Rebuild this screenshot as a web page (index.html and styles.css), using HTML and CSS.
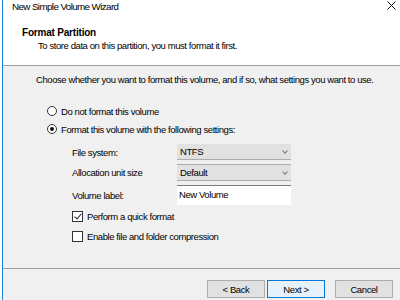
FILE: index.html
```html
<!DOCTYPE html>
<html lang="en">
<head>
  <meta charset="UTF-8">
  <title>New Simple Volume Wizard</title>
  <link rel="stylesheet" href="styles.css">
</head>
<body>
  <div class="window">
    <div class="titlebar">
      <span class="title">New Simple Volume Wizard</span>
      <svg class="close" width="9" height="9" viewBox="0 0 9 9">
        <path d="M0.5 0.5 L8.5 8.5 M8.5 0.5 L0.5 8.5" stroke="#111" stroke-width="1" fill="none"/>
      </svg>
    </div>

    <div class="header">
      <div class="heading">Format Partition</div>
      <div class="sub">To store data on this partition, you must format it first.</div>
    </div>

    <div class="content">
      <p class="intro">Choose whether you want to format this volume, and if so, what settings you want to use.</p>

      <div class="radio"><span class="dot"></span>Do not format this volume</div>
      <div class="radio checked"><span class="dot"></span>Format this volume with the following settings:</div>

      <div class="settings">
        <span class="label">File system:</span>
        <div class="combo">NTFS <span class="arrow"></span></div>
        <span class="label">Allocation unit size</span>
        <div class="combo bordered">Default <span class="arrow"></span></div>
        <span class="label">Volume label:</span>
        <div class="textbox">New Volume</div>
      </div>

      <div class="check checked"><span class="box"></span>Perform a quick format</div>
      <div class="check"><span class="box"></span>Enable file and folder compression</div>
    </div>

    <div class="footer">
      <button class="btn">&lt; Back</button>
      <button class="btn default">Next &gt;</button>
      <button class="btn cancel">Cancel</button>
    </div>
  </div>
</body>
</html>
```

FILE: styles.css
```css
:root {
  --face: #f0f0f0;
  --line: #a0a0a0;
  --text: #000000;
  --blue: #1883d7;
}

html, body {
  margin: 0;
  padding: 0;
  background: #ffffff;
  font-family: "Liberation Sans", Arial, sans-serif;
  font-size: 9.5px;
  letter-spacing: -0.42px;
  color: var(--text);
  overflow: hidden;
}

.window {
  margin-left: 2px;
  border-left: 1px solid var(--blue);
  width: 397px;
  height: 300px;
  overflow: hidden;
  background: var(--face);
}

.titlebar {
  height: 15px;
  background: #fff;
  display: flex;
  align-items: center;
  justify-content: space-between;
  padding: 0 0 0 9px;
}

.title {
  font-size: 9.8px;
  letter-spacing: -0.6px;
  margin-top: -3px;
}

.close {
  margin-right: 4px;
  margin-top: -4px;
}

.header {
  height: 51px;
  box-sizing: border-box;
  background: #fff;
  border-bottom: 1px solid var(--line);
  padding: 12px 0 0 19px;
}

.heading {
  font-weight: bold;
  font-size: 10px;
  letter-spacing: -0.2px;
  height: 12px;
  line-height: 12px;
}

.sub {
  margin: 1px 0 0 16px;
  height: 12px;
  line-height: 12px;
}

.content {
  height: 203px;
  box-sizing: border-box;
  padding: 9px 0 0 33px;
  border-bottom: 1px solid var(--line);
}

.intro {
  margin: 0;
  height: 10px;
  line-height: 10px;
}

.radio {
  display: flex;
  align-items: center;
  height: 16px;
  margin-left: 11px;
}

.radio:first-of-type {
  margin-top: 18px;
}

.radio + .radio {
  margin-top: 2px;
}

.dot {
  width: 8px;
  height: 8px;
  border: 1px solid #333;
  border-radius: 50%;
  background: #fff;
  margin-right: 4px;
  display: flex;
  align-items: center;
  justify-content: center;
}

.radio.checked .dot::after {
  content: "";
  width: 4px;
  height: 4px;
  border-radius: 50%;
  background: #111;
}

.settings {
  display: grid;
  grid-template-columns: 105px 114px;
  grid-template-rows: 16px 17px 20px;
  row-gap: 4px;
  align-items: center;
  margin: 7px 0 0 36px;
}

.combo {
  height: 100%;
  box-sizing: border-box;
  background: #e1e1e1;
  border-bottom: 1px solid #adadad;
  display: flex;
  align-items: center;
  justify-content: space-between;
  padding: 0 4px 0 3px;
}

.combo.bordered {
  border-top: 1px solid #adadad;
}

.arrow {
  width: 3px;
  height: 3px;
  border-right: 1px solid #777;
  border-bottom: 1px solid #777;
  transform: rotate(45deg);
  margin-top: -2px;
}

.textbox {
  height: 100%;
  box-sizing: border-box;
  background: #fff;
  border-top: 1px solid #7a7a7a;
  padding: 3px 0 0 2px;
}

.check {
  display: flex;
  align-items: center;
  height: 16px;
  margin-left: 36px;
}

.settings + .check {
  margin-top: 3px;
}

.check + .check {
  margin-top: 4px;
}

.box {
  width: 9px;
  height: 9px;
  border: 1px solid #333;
  background: #fff;
  margin-right: 4px;
  position: relative;
}

.check.checked .box::after {
  content: "";
  position: absolute;
  left: 3px;
  top: 0px;
  width: 3px;
  height: 6px;
  border-right: 1px solid #222;
  border-bottom: 1px solid #222;
  transform: rotate(40deg);
}

.footer {
  display: flex;
  padding: 11px 0 0 204px;
  gap: 2px;
}

.btn {
  width: 58px;
  height: 18px;
  box-sizing: border-box;
  background: #e1e1e1;
  border: 1px solid #adadad;
  font-family: inherit;
  font-size: 9.5px;
  letter-spacing: -0.4px;
  color: #000;
  padding: 0;
}

.btn.default {
  background: #e5f1fb;
  border-color: #0078d7;
}

.btn.cancel {
  margin-left: 8px;
}
```
